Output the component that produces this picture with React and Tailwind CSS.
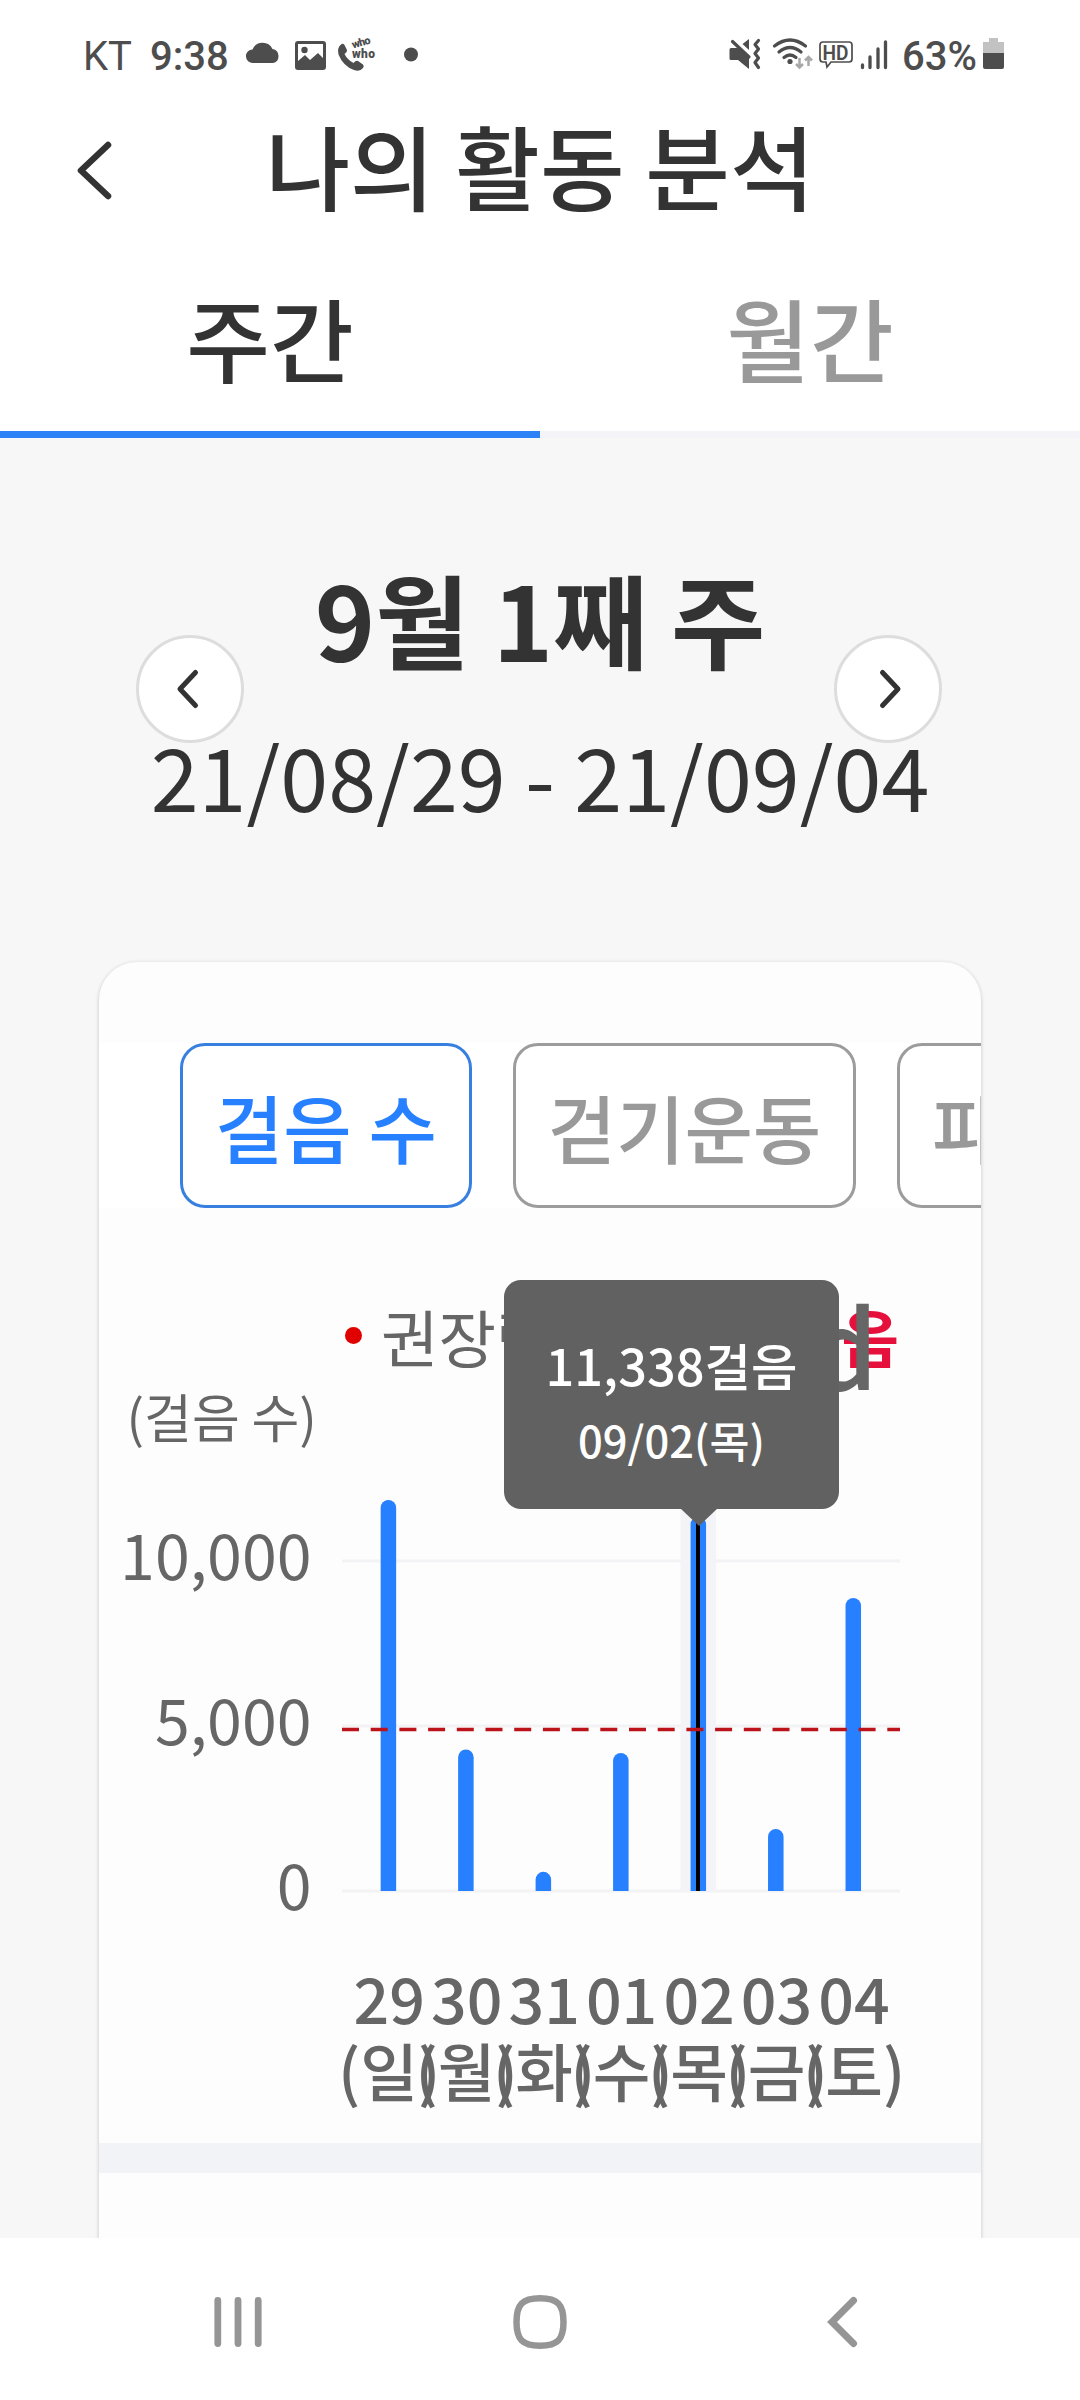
const BLUE = "#2680ff";

const days = [
  { date: "29", day: "일", steps: 11850 },
  { date: "30", day: "월", steps: 4290 },
  { date: "31", day: "화", steps: 580 },
  { date: "01", day: "수", steps: 4180 },
  { date: "02", day: "목", steps: 11338 },
  { date: "03", day: "금", steps: 1880 },
  { date: "04", day: "토", steps: 8880 },
];

export default function App() {
  return (
    <div className="flex h-[2400px] w-[1080px] flex-col overflow-hidden bg-[#f7f7f7] font-['Noto_Sans_CJK_KR',sans-serif] text-[#333333]">
      <StatusBar />
      <Header />
      <Tabs />
      <WeekPicker />

      {/* Card */}
      <main className="min-h-0 flex-1 overflow-hidden pt-[5px] pl-[99px]">
        <section className="h-[1400px] w-[882px] overflow-hidden rounded-[38px] bg-[#fdfdfd] shadow-[0_1px_4px_rgba(0,0,0,0.2)]">
          <div className="mt-[81px] flex h-[165px] gap-[41px] bg-white pl-[81px]">
            <Pill label="걸음 수" active />
            <Pill label="걷기운동" />
            <Pill label="파워워킹" />
          </div>
          <div className="relative h-[935px]">
            <StepChart />
            <Tooltip />
          </div>
          <div className="h-[30px] bg-[#f2f3f7]" />
        </section>
      </main>

      <NavBar />
    </div>
  );
}

/* ================= STATUS BAR ================= */

function StatusBar() {
  return (
    <div className="flex h-[110px] shrink-0 items-start justify-between bg-white pt-[30px] pr-[76px] pl-[83px] font-[Roboto,sans-serif] text-[40px] leading-[53px] text-[#4d4d4d]">
      <div className="flex">
        <span className="w-[67px]">KT</span>
        <span className="w-[91px] font-medium">9:38</span>
        <svg width="190" height="50" viewBox="241 29 190 50" fill="#4d4d4d">
          <path d="M253 62a6.800 6.800 0 0 1-.5-13.600a11 11 0 0 1 20-.5a7.200 7.200 0 0 1 .5 14.100z" />
          <path
            fillRule="evenodd"
            d="M298 40h25a3 3 0 0 1 3 3v23a3 3 0 0 1-3 3h-25a3 3 0 0 1-3-3V43a3 3 0 0 1 3-3zM298 43v17l7-6 5 5 8-7 5 5V43z"
          />
          <circle cx="304.500" cy="49" r="3.200" />
          <path d="M341 43.500q2-1.500 3.500.5l2.500 5q.500 2-2.500 4q3 6 9 9q2.500-3 4.500-2l5 3.500q1.500 1.500 0 3.500q-3 4-9 2q-11-4-15.500-15.500q-1.500-7 2.500-10z" />
          <text x="353" y="47.500" fontSize="11" fontWeight="900" transform="rotate(-16 353 47.500)" textLength="19">who</text>
          <text x="352" y="56.500" fontSize="12" fontWeight="900" textLength="23">who</text>
          <circle cx="411" cy="53.500" r="7" />
        </svg>
      </div>
      <div className="flex">
        <svg width="180" height="50" viewBox="722 30 180 50" fill="#4d4d4d">
          <path d="M731 48h7l1-1 10 10v12l-11-9h-7q-1.500 0-1.500-1.500v-9q0-1.500 1.500-1.500z" />
          <path d="M742.500 44l6.500-5v11z" />
          <path d="M732.500 41.500L749 57" stroke="#4d4d4d" strokeWidth="3.200" strokeLinecap="round" />
          <path
            d="M758.500 40.500l-3.500 4 3.500 4.500-3.500 4.500 3.500 4.500-3.500 4.500 3.500 5"
            fill="none"
            stroke="#4d4d4d"
            strokeWidth="3.200"
            strokeLinecap="round"
            strokeLinejoin="round"
          />
          <g fill="none" stroke="#4d4d4d" strokeWidth="3.200" strokeLinecap="round">
            <path d="M774.500 46q15.500-12 31 0" />
            <path d="M779 52q11-9 22 0" />
            <path d="M784 57.500q6-5 12 0" />
          </g>
          <circle cx="790" cy="61.500" r="2.600" />
          <g fill="none" stroke="#a8a8a8" strokeWidth="2.500">
            <path d="M799.500 58v9M796 64l3.500 3.500L803 64" />
            <path d="M808.500 66v-9M805 60.500l3.500-3.500 3.500 3.500" />
          </g>
          <path
            d="M823 42h26q3 0 3 3v14q0 3-3 3h-18l-4 5-1-5h-3q-3 0-3-3V45q0-3 3-3z"
            fill="none"
            stroke="#4d4d4d"
            strokeWidth="1.700"
          />
          <text x="822.500" y="59.500" fontSize="20.500" fontWeight="600" textLength="26" lengthAdjust="spacingAndGlyphs">HD</text>
          <g stroke="#4d4d4d" strokeWidth="3.300" strokeLinecap="round">
            <path d="M862.500 65v2.500M870 57v10.500M878 49v18.500M885.500 42v25.500" />
          </g>
        </svg>
        <span className="w-[81px] font-medium">63%</span>
        <svg width="21" height="50" viewBox="0 0 21 50">
          <path d="M6 8h9v4h6v11H0V12h6z" fill="#c2c2c2" />
          <path d="M0 23h21v14q0 2-2 2H2q-2 0-2-2z" fill="#4d4d4d" />
        </svg>
      </div>
    </div>
  );
}

/* ================= HEADER ================= */

function Header() {
  return (
    <header className="grid h-[120px] shrink-0 grid-cols-[180px_1fr_180px] items-center bg-white">
      <svg className="ml-[70px]" width="48" height="72" viewBox="0 0 48 72">
        <path d="M38 11L11 36.500L38 62" fill="none" stroke="#333333" strokeWidth="6.500" strokeLinecap="round" strokeLinejoin="round" />
      </svg>
      <h1 className="pb-[13px] text-center text-[92px] leading-[107px] font-medium whitespace-nowrap">나의 활동 분석</h1>
    </header>
  );
}

function Tabs() {
  return (
    <div className="grid h-[208px] shrink-0 grid-cols-2 bg-white text-center text-[91px] leading-[213px] font-medium">
      <div className="h-[208px] border-b-[7px] border-[#2d82f8]">주간</div>
      <div className="h-[208px] border-b-[7px] border-[#f3f3f8] text-[#999999]">월간</div>
    </div>
  );
}

/* ================= WEEK PICKER ================= */

function WeekPicker() {
  return (
    <div className="relative h-[519px] shrink-0 pt-[115px] text-center">
      <h2 className="text-[102.500px] leading-[130px] font-bold">9월 1째 주</h2>
      <p className="mt-[22px] text-[86.300px] leading-[140px]">21/08/29 - 21/09/04</p>
      <RoundButton className="left-[136px]" d="M59.500 37.500L44 54l15.500 16.500" />
      <RoundButton className="left-[834px]" d="M48.500 37.500L64 54 48.500 70.500" />
    </div>
  );
}

function RoundButton({ className, d }) {
  return (
    <button className={`absolute top-[197px] size-[108px] rounded-full border-[3px] border-[#dddddd] bg-white ${className}`}>
      <svg className="-m-[3px]" width="108" height="108" viewBox="0 0 108 108">
        <path d={d} fill="none" stroke="#333333" strokeWidth="5" strokeLinecap="round" strokeLinejoin="round" />
      </svg>
    </button>
  );
}

function Pill({ label, active }) {
  return (
    <button
      className={`
        shrink-0 rounded-[25px] border-[3px] px-[32px]
        text-[74.300px] leading-[158px] font-medium whitespace-nowrap
        ${active ? "border-[#3880e0] text-[#2680ff]" : "border-[#9c9c9c] text-[#999999]"}
      `}
    >
      {label}
    </button>
  );
}

/* ================= CHART ================= */

function StepChart() {
  const left = 342;
  const right = 900;
  const base = 1891;
  const y = (steps) => base - steps * 0.033;
  const x = (i) => 388.4 + i * 77.480;

  return (
    <svg className="block" width="882" height="935" viewBox="99 1208 882 935" fill="#666666">
      {/* Legend */}
      <circle cx="353.500" cy="1335.500" r="8.500" fill="#e00000" />
      <text x="381" y="1363" fontSize="62.500">권장량</text>
      <text x="899" y="1363" fontSize="62.500" fontWeight="700" fill="#e6103c" textAnchor="end">걸음</text>
      <text x="878" y="1390" fontSize="108" fontWeight="500" textAnchor="end">d</text>

      {/* Y axis */}
      <text x="126.500" y="1438" fontSize="52">(걸음 수)</text>
      {[10000, 5000, 0].map((value) => (
        <g key={value}>
          <text x="311.500" y={y(value) + 19} fontSize="62.700" textAnchor="end">
            {value.toLocaleString("en-US")}
          </text>
          <path d={`M${left} ${y(value)}H${right}`} stroke="#f3f3f5" strokeWidth="3" />
        </g>
      ))}

      {/* Bars */}
      <rect x="680.500" y="1490" width="35.500" height="401" fill="#f4f4f8" />
      {days.map(({ date, day, steps }, i) => (
        <g key={date}>
          <path
            d={`M${x(i) - 7.75} ${base}V${y(steps) + 7.75}a7.750 7.750 0 0 1 15.500 0V${base}z`}
            fill={BLUE}
          />
          <text x={x(i) + 0.8} y="2024" fontSize="62.700" fontWeight="500" textAnchor="middle">{date}</text>
          <text x={x(i) + 0.8} y="2095.500" fontSize="62.700" fontWeight="500" textAnchor="middle">({day})</text>
        </g>
      ))}
      <path d="M698 1515V1891" stroke="#000000" strokeWidth="4" />
      <path d={`M${left} 1729.500H${right}`} stroke="#bb1319" strokeWidth="3.500" strokeDasharray="17 11.700" />
    </svg>
  );
}

function Tooltip() {
  return (
    <div className="absolute top-[72px] left-[405px] flex h-[229px] w-[335px] flex-col items-center rounded-[17px] bg-[#616161] pt-[46px] font-medium text-white">
      <span className="text-[50.500px] leading-[76px]">11,338걸음</span>
      <span className="text-[43.500px] leading-[76px]">09/02(목)</span>
      <svg className="absolute top-[228px] left-[176px]" width="38" height="18" viewBox="0 0 38 18">
        <path d="M0 0h38L19 18z" fill="#616161" />
      </svg>
    </div>
  );
}

/* ================= NAV BAR ================= */

function NavBar() {
  return (
    <nav className="grid h-[162px] shrink-0 grid-cols-[476px_128px_476px] items-center bg-white pt-[6px]">
      <svg className="ml-[208px]" width="60" height="60" viewBox="208 2292 60 60">
        <path d="M217.800 2300.500v43M238 2300.500v43M258.200 2300.500v43" stroke="#959595" strokeWidth="6.800" strokeLinecap="round" />
      </svg>
      <svg className="mx-auto" width="60" height="60" viewBox="510 2292 60 60">
        <path
          d="M540 2298.300c17.500 0 23.500 6 23.500 23.700s-6 23.700-23.500 23.700s-23.500-6-23.500-23.700s6-23.700 23.500-23.700z"
          fill="none"
          stroke="#959595"
          strokeWidth="6.500"
        />
      </svg>
      <svg className="ml-[216px]" width="50" height="60" viewBox="820 2292 50 60">
        <path d="M853.500 2300.500L832 2322l21.500 21.500" fill="none" stroke="#959595" strokeWidth="7" strokeLinecap="round" />
      </svg>
    </nav>
  );
}
